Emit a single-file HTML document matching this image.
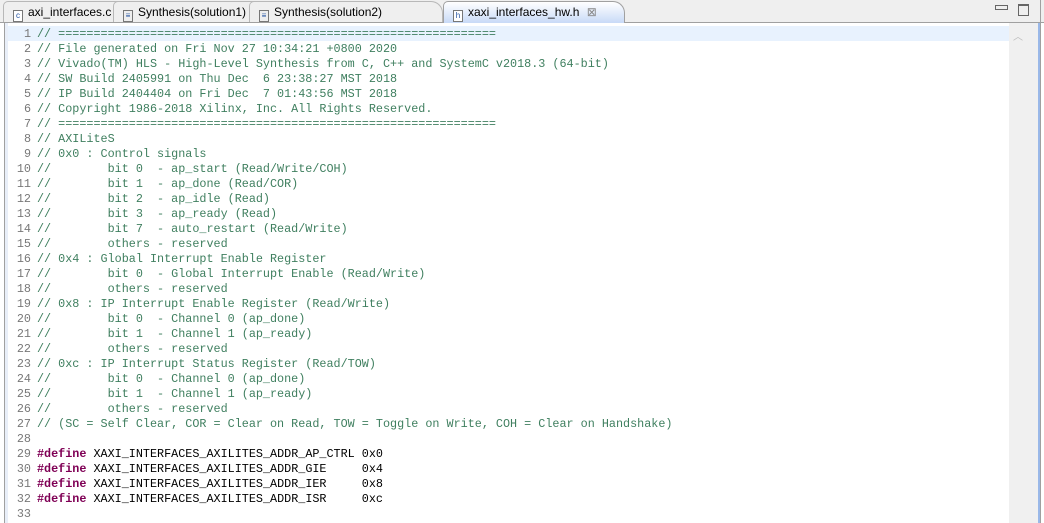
<!DOCTYPE html><html><head><style>
body{margin:0;width:1044px;height:523px;overflow:hidden;background:#fff;font-family:"Liberation Sans",sans-serif;position:relative}
.bar{position:absolute;left:0;top:0;width:1044px;height:22px;background:#efefef;border-bottom:1px solid #a0a0a0}
.tab{position:absolute;top:1px;height:21px;font-size:12px;line-height:21px;color:#000;border:1px solid #b8b8b8;border-bottom:none;border-radius:5px 12px 0 0;box-sizing:border-box;white-space:nowrap;overflow:hidden}
.ic{display:inline-block;width:10px;height:12px;border:1px solid #777;vertical-align:-2px;margin:0 5px 0 9px;font-size:8px;line-height:10px;text-align:center;color:#2050a0;background:#fff;box-sizing:border-box}
.code{position:absolute;left:0;top:27px;width:1009px;font-family:"Liberation Mono",monospace;font-size:11.78px;line-height:15px}
.l{height:15px;white-space:pre}
.ln{display:inline-block;width:31px;text-align:right;color:#787878;margin-right:6px}
.c{color:#3f7f5f}.k{color:#7f0055;font-weight:bold}
</style></head><body>
<div class="bar"></div>
<div class="tab" style="left:3px;width:148px"><span class="ic">c</span>axi_interfaces.c</div>
<div class="tab" style="left:113px;width:172px;background:#efefef"><span class="ic" style="background:#eee">≡</span>Synthesis(solution1)</div>
<div class="tab" style="left:249px;width:194px;background:#efefef"><span class="ic" style="background:#eee">≡</span>Synthesis(solution2)</div>
<div class="tab" style="left:443px;width:182px;background:linear-gradient(#fff,#c8daf7);border-color:#a0a0a0;height:22px"><span class="ic">h</span>xaxi_interfaces_hw.h <span style="color:#888;margin-left:4px">⊠</span></div>
<div style="position:absolute;left:4px;top:23px;width:1px;height:500px;background:#a0a0a0"></div>
<div style="position:absolute;left:5px;top:23px;width:3px;height:500px;background:#e8eef8"></div>
<div style="position:absolute;left:8px;top:26px;width:1001px;height:15px;background:#e8f2fe"></div>
<div style="position:absolute;left:1009px;top:23px;width:29px;height:500px;background:#f0f0f0"></div>
<div style="position:absolute;left:1038px;top:23px;width:2px;height:500px;background:#9ab8e8"></div>
<div style="position:absolute;left:1040px;top:0;width:1px;height:523px;background:#a0a0a0"></div>
<div style="position:absolute;left:1013px;top:28px;color:#bbb;font-size:10px">︿</div>
<div style="position:absolute;left:995px;top:5px;width:11px;height:3px;border:1px solid #666"></div>
<div style="position:absolute;left:1018px;top:4px;width:9px;height:9px;border:1px solid #666;border-top-width:2px"></div>
<div class="code"><div class="l"><span class="ln">1</span><span class="c">// ==============================================================</span></div><div class="l"><span class="ln">2</span><span class="c">// File generated on Fri Nov 27 10:34:21 +0800 2020</span></div><div class="l"><span class="ln">3</span><span class="c">// Vivado(TM) HLS - High-Level Synthesis from C, C++ and SystemC v2018.3 (64-bit)</span></div><div class="l"><span class="ln">4</span><span class="c">// SW Build 2405991 on Thu Dec  6 23:38:27 MST 2018</span></div><div class="l"><span class="ln">5</span><span class="c">// IP Build 2404404 on Fri Dec  7 01:43:56 MST 2018</span></div><div class="l"><span class="ln">6</span><span class="c">// Copyright 1986-2018 Xilinx, Inc. All Rights Reserved.</span></div><div class="l"><span class="ln">7</span><span class="c">// ==============================================================</span></div><div class="l"><span class="ln">8</span><span class="c">// AXILiteS</span></div><div class="l"><span class="ln">9</span><span class="c">// 0x0 : Control signals</span></div><div class="l"><span class="ln">10</span><span class="c">//        bit 0  - ap_start (Read/Write/COH)</span></div><div class="l"><span class="ln">11</span><span class="c">//        bit 1  - ap_done (Read/COR)</span></div><div class="l"><span class="ln">12</span><span class="c">//        bit 2  - ap_idle (Read)</span></div><div class="l"><span class="ln">13</span><span class="c">//        bit 3  - ap_ready (Read)</span></div><div class="l"><span class="ln">14</span><span class="c">//        bit 7  - auto_restart (Read/Write)</span></div><div class="l"><span class="ln">15</span><span class="c">//        others - reserved</span></div><div class="l"><span class="ln">16</span><span class="c">// 0x4 : Global Interrupt Enable Register</span></div><div class="l"><span class="ln">17</span><span class="c">//        bit 0  - Global Interrupt Enable (Read/Write)</span></div><div class="l"><span class="ln">18</span><span class="c">//        others - reserved</span></div><div class="l"><span class="ln">19</span><span class="c">// 0x8 : IP Interrupt Enable Register (Read/Write)</span></div><div class="l"><span class="ln">20</span><span class="c">//        bit 0  - Channel 0 (ap_done)</span></div><div class="l"><span class="ln">21</span><span class="c">//        bit 1  - Channel 1 (ap_ready)</span></div><div class="l"><span class="ln">22</span><span class="c">//        others - reserved</span></div><div class="l"><span class="ln">23</span><span class="c">// 0xc : IP Interrupt Status Register (Read/TOW)</span></div><div class="l"><span class="ln">24</span><span class="c">//        bit 0  - Channel 0 (ap_done)</span></div><div class="l"><span class="ln">25</span><span class="c">//        bit 1  - Channel 1 (ap_ready)</span></div><div class="l"><span class="ln">26</span><span class="c">//        others - reserved</span></div><div class="l"><span class="ln">27</span><span class="c">// (SC = Self Clear, COR = Clear on Read, TOW = Toggle on Write, COH = Clear on Handshake)</span></div><div class="l"><span class="ln">28</span></div><div class="l"><span class="ln">29</span><span class="k">#define</span> XAXI_INTERFACES_AXILITES_ADDR_AP_CTRL 0x0</div><div class="l"><span class="ln">30</span><span class="k">#define</span> XAXI_INTERFACES_AXILITES_ADDR_GIE     0x4</div><div class="l"><span class="ln">31</span><span class="k">#define</span> XAXI_INTERFACES_AXILITES_ADDR_IER     0x8</div><div class="l"><span class="ln">32</span><span class="k">#define</span> XAXI_INTERFACES_AXILITES_ADDR_ISR     0xc</div><div class="l"><span class="ln">33</span></div></div>
</body></html>
